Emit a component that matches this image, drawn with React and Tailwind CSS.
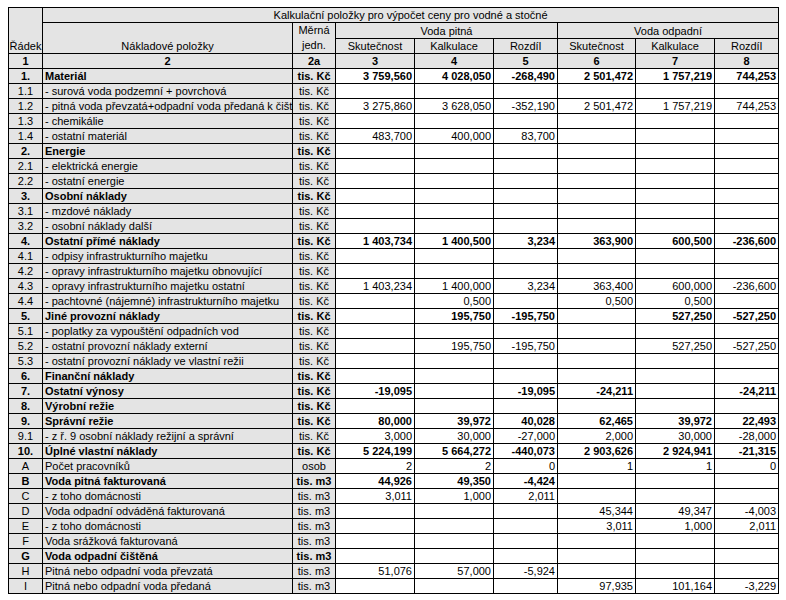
import React from "react";

const rows = [
  { n: "1.", l: "Materiál", u: "tis. Kč", b: true, v: ["3 759,560", "4 028,050", "-268,490", "2 501,472", "1 757,219", "744,253"] },
  { n: "1.1", l: "- surová voda podzemní + povrchová", u: "tis. Kč" },
  { n: "1.2", l: "- pitná voda převzatá+odpadní voda předaná k čištění", u: "tis. Kč", v: ["3 275,860", "3 628,050", "-352,190", "2 501,472", "1 757,219", "744,253"] },
  { n: "1.3", l: "- chemikálie", u: "tis. Kč" },
  { n: "1.4", l: "- ostatní materiál", u: "tis. Kč", v: ["483,700", "400,000", "83,700", "", "", ""] },
  { n: "2.", l: "Energie", u: "tis. Kč", b: true },
  { n: "2.1", l: "- elektrická energie", u: "tis. Kč" },
  { n: "2.2", l: "- ostatní energie", u: "tis. Kč" },
  { n: "3.", l: "Osobní náklady", u: "tis. Kč", b: true },
  { n: "3.1", l: "- mzdové náklady", u: "tis. Kč" },
  { n: "3.2", l: "- osobní náklady další", u: "tis. Kč" },
  { n: "4.", l: "Ostatní přímé náklady", u: "tis. Kč", b: true, v: ["1 403,734", "1 400,500", "3,234", "363,900", "600,500", "-236,600"] },
  { n: "4.1", l: "- odpisy infrastrukturního majetku", u: "tis. Kč" },
  { n: "4.2", l: "- opravy infrastrukturního majetku obnovující", u: "tis. Kč" },
  { n: "4.3", l: "- opravy infrastrukturního majetku ostatní", u: "tis. Kč", v: ["1 403,234", "1 400,000", "3,234", "363,400", "600,000", "-236,600"] },
  { n: "4.4", l: "- pachtovné (nájemné) infrastrukturního majetku", u: "tis. Kč", v: ["", "0,500", "", "0,500", "0,500", ""] },
  { n: "5.", l: "Jiné provozní náklady", u: "tis. Kč", b: true, v: ["", "195,750", "-195,750", "", "527,250", "-527,250"] },
  { n: "5.1", l: "- poplatky za vypouštění odpadních vod", u: "tis. Kč" },
  { n: "5.2", l: "- ostatní provozní náklady externí", u: "tis. Kč", v: ["", "195,750", "-195,750", "", "527,250", "-527,250"] },
  { n: "5.3", l: "- ostatní provozní náklady ve vlastní režii", u: "tis. Kč" },
  { n: "6.", l: "Finanční náklady", u: "tis. Kč", b: true },
  { n: "7.", l: "Ostatní výnosy", u: "tis. Kč", b: true, v: ["-19,095", "", "-19,095", "-24,211", "", "-24,211"] },
  { n: "8.", l: "Výrobní režie", u: "tis. Kč", b: true },
  { n: "9.", l: "Správní režie", u: "tis. Kč", b: true, v: ["80,000", "39,972", "40,028", "62,465", "39,972", "22,493"] },
  { n: "9.1", l: "- z ř. 9 osobní náklady režijní a správní", u: "tis. Kč", v: ["3,000", "30,000", "-27,000", "2,000", "30,000", "-28,000"] },
  { n: "10.", l: "Úplné vlastní náklady", u: "tis. Kč", b: true, v: ["5 224,199", "5 664,272", "-440,073", "2 903,626", "2 924,941", "-21,315"] },
  { n: "A", l: "Počet pracovníků", u: "osob", v: ["2", "2", "0", "1", "1", "0"] },
  { n: "B", l: "Voda pitná fakturovaná", u: "tis. m3", b: true, v: ["44,926", "49,350", "-4,424", "", "", ""] },
  { n: "C", l: "- z toho domácnosti", u: "tis. m3", v: ["3,011", "1,000", "2,011", "", "", ""] },
  { n: "D", l: "Voda odpadní odváděná fakturovaná", u: "tis. m3", v: ["", "", "", "45,344", "49,347", "-4,003"] },
  { n: "E", l: "- z toho domácnosti", u: "tis. m3", v: ["", "", "", "3,011", "1,000", "2,011"] },
  { n: "F", l: "Voda srážková fakturovaná", u: "tis. m3" },
  { n: "G", l: "Voda odpadní čištěná", u: "tis. m3", b: true },
  { n: "H", l: "Pitná nebo odpadní voda převzatá", u: "tis. m3", v: ["51,076", "57,000", "-5,924", "", "", ""] },
  { n: "I", l: "Pitná nebo odpadní voda předaná", u: "tis. m3", v: ["", "", "", "97,935", "101,164", "-3,229"] },
];

const cell = "border border-black p-0 h-[15px] leading-[13px] align-bottom whitespace-nowrap overflow-hidden";
const gray = "bg-[#e4e4e4]";

export default function App() {
  return (
    <div className="bg-white w-[786px] h-[600px] pt-[7px] pl-[8px] text-black text-[11px]" style={{ fontFamily: '"Liberation Sans", Arial, sans-serif' }}>
      <table className="border-collapse table-fixed w-[770px]">
        <colgroup>
          <col className="w-[34px]" />
          <col className="w-[250px]" />
          <col className="w-[43px]" />
          <col className="w-[79px]" />
          <col className="w-[79px]" />
          <col className="w-[64px]" />
          <col className="w-[78px]" />
          <col className="w-[79px]" />
          <col className="w-[64px]" />
        </colgroup>
        <tbody>
          <tr>
            <td rowSpan={3} className={`${cell} ${gray} text-center overflow-visible`}>Řádek</td>
            <td colSpan={8} className={`${cell} ${gray} text-center`}>Kalkulační položky pro výpočet ceny pro vodné a stočné</td>
          </tr>
          <tr>
            <td rowSpan={2} className={`${cell} ${gray} text-center`}>Nákladové položky</td>
            <td rowSpan={2} className={`${cell} ${gray} text-center leading-[15px]`}>
              <div>Měrná</div>
              <div>jedn.</div>
            </td>
            <td colSpan={3} className={`${cell} ${gray} text-center`}>Voda pitná</td>
            <td colSpan={3} className={`${cell} ${gray} text-center`}>Voda odpadní</td>
          </tr>
          <tr>
            {["Skutečnost", "Kalkulace", "Rozdíl", "Skutečnost", "Kalkulace", "Rozdíl"].map((t, i) => (
              <td key={i} className={`${cell} ${gray} text-center`}>{t}</td>
            ))}
          </tr>
          <tr>
            {["1", "2", "2a", "3", "4", "5", "6", "7", "8"].map((t, i) => (
              <td key={i} className={`${cell} ${gray} text-center font-bold`}>{t}</td>
            ))}
          </tr>
          {rows.map((r, i) => {
            const v = r.v || ["", "", "", "", "", ""];
            const w = r.b ? "font-bold" : "";
            return (
              <tr key={i}>
                <td className={`${cell} ${gray} text-center ${w}`}>{r.n}</td>
                <td className={`${cell} ${gray} pl-[2px] ${w}`}>{r.l}</td>
                <td className={`${cell} ${gray} text-center ${w}`}>{r.u}</td>
                {v.map((x, j) => (
                  <td key={j} className={`${cell} bg-white text-right pr-[2px] ${w}`}>{x}</td>
                ))}
              </tr>
            );
          })}
        </tbody>
      </table>
    </div>
  );
}
